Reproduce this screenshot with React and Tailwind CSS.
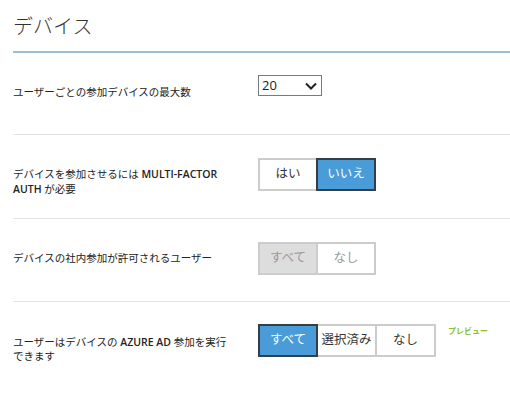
export default function App() {
  const font = { fontFamily: '"Open Sans", "Noto Sans CJK JP", sans-serif' };
  const btn = "flex items-center justify-center h-[33px] border-2 text-[12.5px]";
  return (
    <div className="w-[510px] h-[401px] bg-white pl-[13px] text-[#222]" style={font}>
      <div className="h-[53px] pt-[15px] border-b-2 border-[#9bbfd2]">
        <div className="text-[20px] leading-[24px] font-light text-[#333]">デバイス</div>
      </div>

      <div className="flex items-start h-[82px] pt-[22px] border-b border-[#e3e3e3]">
        <div className="w-[245px] mt-[10px] text-[10.5px] leading-[15px]">ユーザーごとの参加デバイスの最大数</div>
        <div className="flex items-center justify-between w-[64px] h-[21px] border border-[#7a7a7a] pl-[3px] pr-[4px]">
          <span className="text-[13px] leading-none text-[#222]">20</span>
          <svg width="12" height="8" viewBox="0 0 12 8">
            <path d="M1 1.5 L6 6.5 L11 1.5" fill="none" stroke="#222" strokeWidth="2" />
          </svg>
        </div>
      </div>

      <div className="flex items-start h-[84px] pt-[23px] border-b border-[#e3e3e3]">
        <div className="w-[245px] mt-[9px] text-[10.5px] leading-[15px]">
          デバイスを参加させるには <span className="font-semibold">MULTI-FACTOR</span>
          <br />
          <span className="font-semibold">AUTH</span> が必要
        </div>
        <div className="flex">
          <div className={`${btn} w-[60px] border-[#cccccc] bg-white text-[#333]`}>はい</div>
          <div className={`${btn} w-[60px] -ml-[2px] border-[#333e48] bg-[#4a9cd9] text-white`}>いいえ</div>
        </div>
      </div>

      <div className="flex items-start h-[83px] pt-[23px] border-b border-[#e3e3e3]">
        <div className="w-[245px] mt-[9px] text-[10.5px] leading-[15px]">デバイスの社内参加が許可されるユーザー</div>
        <div className="flex">
          <div className={`${btn} w-[60px] border-[#cccccc] bg-[#dddddd] text-[#999]`}>すべて</div>
          <div className={`${btn} w-[60px] -ml-[2px] border-[#cccccc] bg-white text-[#999]`}>なし</div>
        </div>
      </div>

      <div className="flex items-start pt-[22px]">
        <div className="w-[245px] mt-[11px] text-[10.5px] leading-[14px]">
          ユーザーはデバイスの <span className="font-semibold">AZURE AD</span> 参加を実行
          <br />
          できます
        </div>
        <div className="flex">
          <div className={`${btn} w-[60px] relative z-10 border-[#333e48] bg-[#4a9cd9] text-white`}>すべて</div>
          <div className={`${btn} w-[61px] -ml-[2px] border-[#cccccc] bg-white text-[#333]`}>選択済み</div>
          <div className={`${btn} w-[61px] -ml-[2px] border-[#cccccc] bg-white text-[#333]`}>なし</div>
        </div>
        <div className="ml-[12px] mt-[2px] text-[8px] leading-[10px] font-bold text-[#8cbf2e]">プレビュー</div>
      </div>
    </div>
  );
}
